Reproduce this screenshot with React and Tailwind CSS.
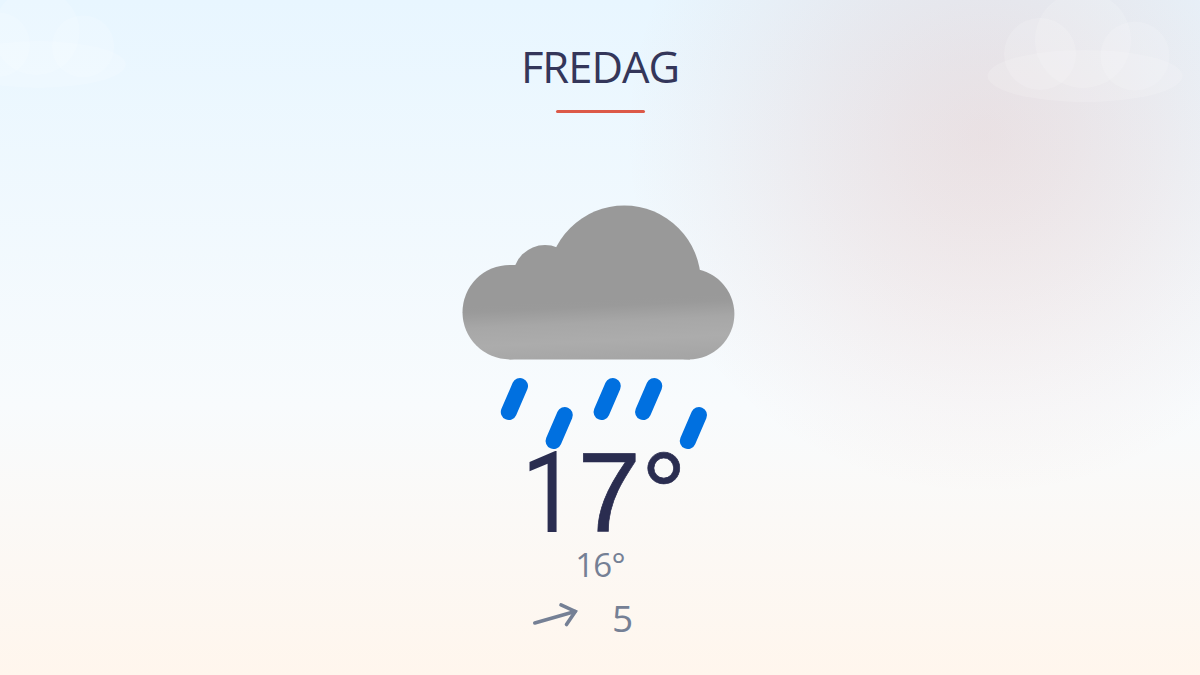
import React from "react";

const drops = [
  { x: 520, y: 386 },
  { x: 564.8, y: 415 },
  { x: 612.8, y: 386 },
  { x: 654.3, y: 386 },
  { x: 699, y: 415 },
];

const Haze = ({ className }) => (
  <svg viewBox="0 0 200 112" className={className} fill="#fff" fillOpacity="0.15">
    <circle cx="54" cy="64" r="36" />
    <circle cx="97" cy="50" r="48" />
    <circle cx="149" cy="66" r="34.5" />
    <ellipse cx="99" cy="86" rx="97.5" ry="26" />
  </svg>
);

const RainCloud = () => (
  <svg viewBox="460 200 280 252" className="w-[280px] h-[252px]">
    <defs>
      <linearGradient
        id="cloud"
        gradientUnits="userSpaceOnUse"
        x1="597"
        y1="300"
        x2="600"
        y2="364"
      >
        <stop offset="0" stopColor="#999999" />
        <stop offset="0.1" stopColor="#9a9a9a" />
        <stop offset="0.35" stopColor="#a7a7a7" />
        <stop offset="0.64" stopColor="#acacac" />
        <stop offset="1" stopColor="#a4a4a4" />
      </linearGradient>
    </defs>
    <g fill="url(#cloud)">
      <circle cx="509.7" cy="312.2" r="47.2" />
      <circle cx="545" cy="277" r="32" />
      <circle cx="624.3" cy="282" r="76.5" />
      <circle cx="689" cy="314" r="45.4" />
      <path d="M509.5 265H545L690 275V359.4H509.5Z" />
    </g>
    <g stroke="#0070e0" strokeWidth="16" strokeLinecap="round">
      {drops.map((d) => (
        <line key={d.x} x1={d.x} y1={d.y} x2={d.x - 11.2} y2={d.y + 26} />
      ))}
    </g>
  </svg>
);

const WindArrow = () => (
  <svg
    viewBox="530 600 50 30"
    className="w-[50px] h-[30px]"
    fill="none"
    stroke="#758095"
    strokeWidth="3.6"
    strokeLinecap="round"
    strokeLinejoin="miter"
  >
    <path d="M534.8 621.9L575 610.6" />
    <path d="M561 603.9L575.3 610.4L566.5 623.5" />
  </svg>
);

const App = () => {
  return (
    <div className="relative w-[1200px] h-[675px] overflow-hidden bg-[linear-gradient(180deg,#e8f6ff_0%,#f8fbfd_60%,#fff6ed_100%)] font-['Open_Sans','Noto_Sans',sans-serif]">
      {/* Sun glow */}
      <div className="absolute inset-0 bg-[radial-gradient(circle_360px_at_985px_135px,rgba(212,96,76,0.15)_0%,rgba(212,96,76,0.125)_22%,rgba(212,96,76,0.09)_45%,rgba(212,96,76,0.045)_72%,rgba(212,96,76,0)_100%)]" />
      <Haze className="absolute left-[986px] top-[-10px] w-[200px] h-[112px] overflow-visible" />
      <Haze className="absolute left-[-51px] top-[-13px] w-[180px] h-[101px] overflow-visible" />

      <main className="relative flex flex-col items-center h-full">
        <h1 className="mt-[39px] h-14 leading-[56px] text-[43.5px] tracking-[-1px] text-[#34365a]">
          FREDAG
        </h1>
        <div className="mt-[14.5px] w-[89px] h-[3px] rounded-full bg-[#dc5948]" />
        <div className="mt-[87.5px]">
          <RainCloud />
        </div>
        <div className="-mt-[5.5px] flex h-[92px] leading-[92px] text-[114px] text-[#2a2d50] font-['Liberation_Sans',Arial,sans-serif]">
          <span className="inline-block origin-right scale-x-[0.87] font-['Roboto',sans-serif]">
            1
          </span>
          <span className="[-webkit-text-stroke:0.7px_#2a2d50]">7°</span>
        </div>
        <div className="mt-[8px] h-9 leading-9 text-[33px] tracking-[-0.8px] text-[#758095]">
          16°
        </div>
        <div className="mt-[11.5px] flex items-center gap-[32px] h-11 pr-[37px]">
          <WindArrow />
          <span className="mt-[4px] text-[37px] leading-[44px] text-[#758095]">5</span>
        </div>
      </main>
    </div>
  );
};

export default App;
